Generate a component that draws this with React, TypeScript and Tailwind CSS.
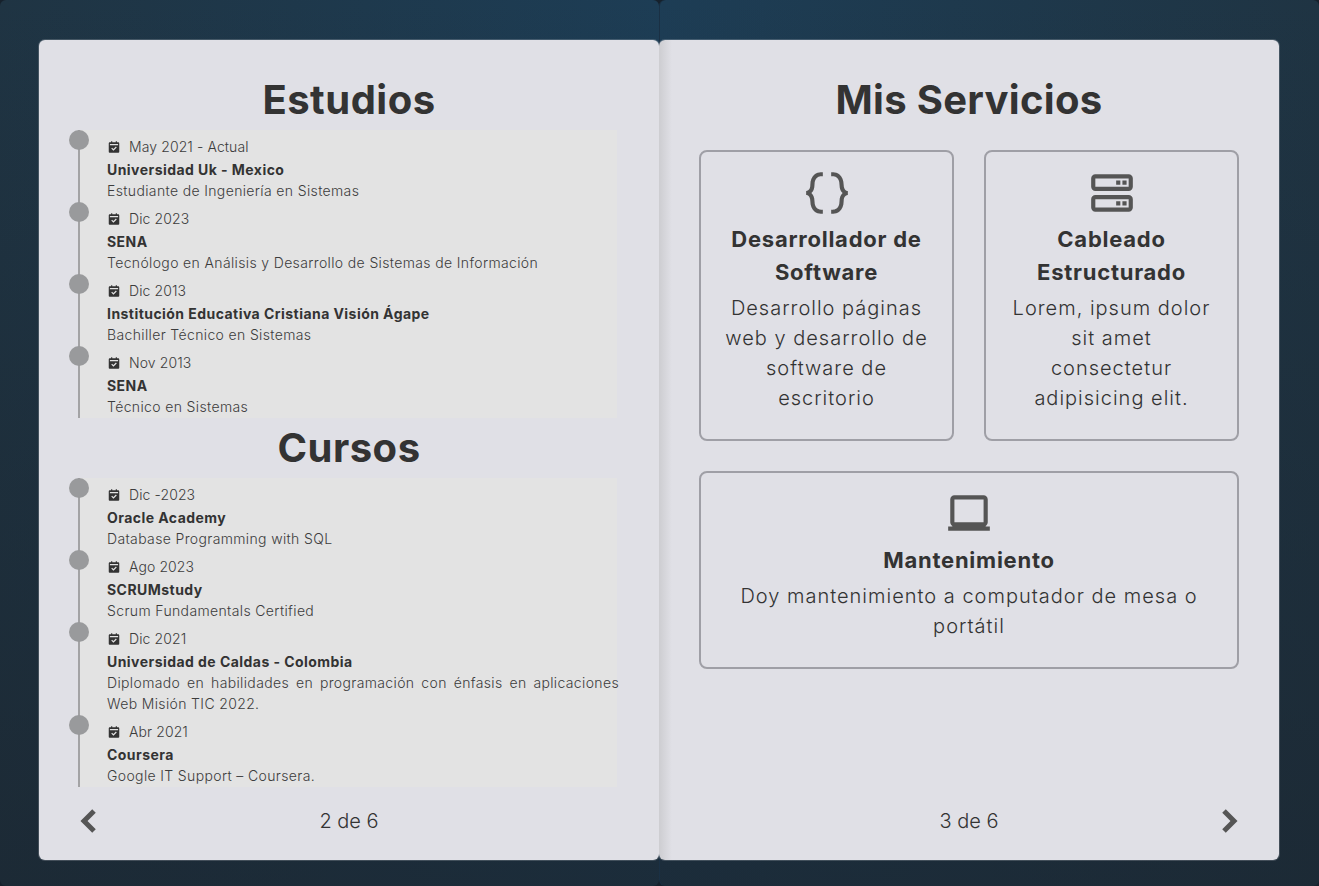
import React from 'react';
import { BiCodeCurly, BiServer, BiLaptop, BiSolidChevronLeft, BiSolidChevronRight, BiSolidCalendarCheck } from 'react-icons/bi';

const estudios = [
  { date: 'May 2021 - Actual', title: 'Universidad Uk - Mexico', text: 'Estudiante de Ingeniería en Sistemas' },
  { date: 'Dic 2023', title: 'SENA', text: 'Tecnólogo en Análisis y Desarrollo de Sistemas de Información' },
  { date: 'Dic 2013', title: 'Institución Educativa Cristiana Visión Ágape', text: 'Bachiller Técnico en Sistemas' },
  { date: 'Nov 2013', title: 'SENA', text: 'Técnico en Sistemas' },
];

const cursos = [
  { date: 'Dic -2023', title: 'Oracle Academy', text: 'Database Programming with SQL' },
  { date: 'Ago 2023', title: 'SCRUMstudy', text: 'Scrum Fundamentals Certified' },
  { date: 'Dic 2021', title: 'Universidad de Caldas - Colombia', text: 'Diplomado en habilidades en programación con énfasis en aplicaciones Web Misión TIC 2022.' },
  { date: 'Abr 2021', title: 'Coursera', text: 'Google IT Support – Coursera.' },
];

type Item = { date: string; title: string; text: string };

function Timeline({ items }: { items: Item[] }) {
  return (
    <div className="bg-[#e3e3e3] w-[538px]">
      {items.map((item) => (
        <div key={item.date + item.title} className="relative border-l-2 border-[#a3a3a5] ml-[-1px] pl-[27px] pt-[6px] pb-[1px] text-[14px] leading-[21px] text-[#333]">
          <span className="absolute left-[-11px] top-0 w-5 h-5 rounded-full bg-[#999a9c]" />
          <div className="flex items-center h-[23px] pb-[2px] font-light text-[#3c3c3c] tracking-[0.1px]">
            <BiSolidCalendarCheck size={14} className="text-[#333] mr-[8px]" />
            {item.date}
          </div>
          <div className="font-bold tracking-[0.45px] text-[#333]">{item.title}</div>
          <p className="font-light text-justify w-[512px] tracking-[0.36px] text-[#3c3c3c]">{item.text}</p>
        </div>
      ))}
    </div>
  );
}

function ServiceCard({ icon, title, text }: { icon: React.ReactNode; title: string; text: string }) {
  return (
    <div className="border-2 border-[#9f9fa6] rounded-lg px-[24px] pt-[16px] pb-[26px] flex flex-col items-center text-center">
      {icon}
      <h3 className="text-[22px] leading-[33px] font-bold tracking-[0.75px] text-[#333] mt-[5px]">{title}</h3>
      <p className="text-[20px] leading-[30px] font-light tracking-[1px] text-[#333] mt-[4px]">{text}</p>
    </div>
  );
}

export default function App() {
  return (
    <div className="w-full h-[886px] overflow-hidden bg-[#16212c] flex font-['Inter',sans-serif]">
      <div className="w-[659px] h-full rounded-md pl-[39px] pt-[40px] bg-[linear-gradient(to_bottom,rgba(27,38,48,0)_0%,rgba(27,38,48,0.72)_100%),linear-gradient(to_left,#1d3d55,#1f3443)]">
        <div className="w-[620px] h-[820px] bg-[#e0e0e6] rounded-md px-[40px] pt-[30px] flex flex-col shadow-[0_0_0_1px_rgba(224,224,230,0.2)]">
          <h2 className="text-[40px] leading-[60px] font-bold tracking-[0.5px] text-center text-[#333]">Estudios</h2>
          <Timeline items={estudios} />
          <h2 className="text-[40px] leading-[60px] font-bold tracking-[0.5px] text-center text-[#333]">Cursos</h2>
          <Timeline items={cursos} />
          <div className="relative flex items-center justify-center mt-auto mb-[24px] h-[30px]">
            <BiSolidChevronLeft size={40} className="text-[#555] absolute left-[-10px]" />
            <span className="text-[20px] font-light text-[#333]">2 de 6</span>
          </div>
        </div>
      </div>
      <div className="w-[660px] h-full rounded-md pt-[40px] bg-[linear-gradient(to_bottom,rgba(27,38,48,0)_0%,rgba(27,38,48,0.72)_100%),linear-gradient(to_right,#1d3d55,#1f3443)] shadow-[inset_1px_0_0_#1a3044]">
        <div className="w-[620px] h-[820px] bg-[linear-gradient(to_right,#cdcdd1_0px,#e0e0e6_13px)] rounded-md px-[40px] pt-[30px] flex flex-col shadow-[0_0_0_1px_rgba(224,224,230,0.2)]">
          <h2 className="text-[40px] leading-[60px] font-bold tracking-[0.3px] text-center text-[#333]">Mis Servicios</h2>
          <div className="grid grid-cols-2 gap-[30px] mt-[20px]">
            <ServiceCard
              icon={<BiCodeCurly size={50} className="text-[#555]" />}
              title="Desarrollador de Software"
              text="Desarrollo páginas web y desarrollo de software de escritorio"
            />
            <ServiceCard
              icon={<BiServer size={50} className="text-[#555]" />}
              title="Cableado Estructurado"
              text="Lorem, ipsum dolor sit amet consectetur adipisicing elit."
            />
            <div className="col-span-2">
              <ServiceCard
                icon={<BiLaptop size={50} className="text-[#555]" />}
                title="Mantenimiento"
                text="Doy mantenimiento a computador de mesa o portátil"
              />
            </div>
          </div>
          <div className="relative flex items-center justify-center mt-auto mb-[24px] h-[30px]">
            <span className="text-[20px] font-light text-[#333]">3 de 6</span>
            <BiSolidChevronRight size={40} className="text-[#555] absolute right-[-10px]" />
          </div>
        </div>
      </div>
    </div>
  );
}
